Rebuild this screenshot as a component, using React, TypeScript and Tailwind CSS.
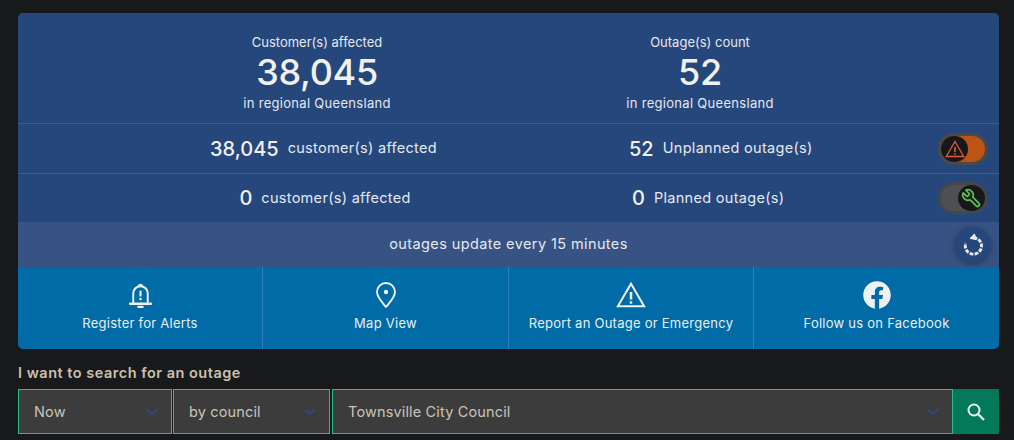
function StatTop({ label, value }: { label: string; value: string }) {
  return (
    <div className="flex w-[383px] flex-col items-center">
      <p className="text-[13px] leading-[16px] text-[#e4e8ef]">{label}</p>
      <p className="mt-[1px] text-[36px] leading-[42px] font-medium tracking-[-0.3px] text-[#f0f0ee]">{value}</p>
      <p className="mt-[2px] text-[13px] leading-[16px] tracking-[0.3px] text-[#e4e8ef]">in regional Queensland</p>
    </div>
  );
}

function StatRow({ value, text }: { value: string; text: string }) {
  return (
    <div className="flex items-center gap-[9px]">
      <span className="text-[20px] leading-[26px] font-medium text-[#f0f0ee]">{value}</span>
      <span className="pb-[1px] text-[14.5px] leading-[18px] tracking-[0.3px] text-[#e4e8ef]">{text}</span>
    </div>
  );
}

function WarningIcon({ className }: { className: string }) {
  return (
    <svg viewBox="0 0 24 24" fill="none" stroke="currentColor" strokeWidth="1.6" className={className}>
      <path d="M12 3 L22.5 21 H1.5 Z" strokeLinejoin="miter" />
      <path d="M12 9.5 V15.5 M12 17 V19" strokeWidth="2" />
    </svg>
  );
}

function Toggle({ on }: { on: boolean }) {
  return (
    <div
      className={`flex h-[32px] w-[50px] items-center rounded-full border-[3px] ${
        on ? "justify-start border-[#4b4a48] bg-[#bf5316]" : "justify-end border-[#45474b] bg-[#4e5053]"
      }`}
    >
      <div className="flex h-[26px] w-[27px] items-center justify-center rounded-full bg-[#17181a]">
        {on ? (
          <WarningIcon className="h-[20px] w-[20px] text-[#e0593a]" />
        ) : (
          <svg viewBox="0 0 24 24" fill="none" stroke="#5cc04f" strokeWidth="2" strokeLinejoin="round" className="h-[21px] w-[21px] -scale-x-100">
            <path d="M14.7 6.3a1 1 0 0 0 0 1.4l1.6 1.6a1 1 0 0 0 1.4 0l3.77-3.77a6 6 0 0 1-7.94 7.94l-6.91 6.91a2.12 2.12 0 0 1-3-3l6.91-6.91a6 6 0 0 1 7.94-7.94l-3.76 3.76z" />
          </svg>
        )}
      </div>
    </div>
  );
}

function LinkCell({ label, icon, className }: { label: string; icon: React.ReactNode; className: string }) {
  return (
    <div className={`flex flex-col items-center pt-[13px] ${className}`}>
      <div className="flex h-[30px] items-center justify-center text-[#eef2f5]">{icon}</div>
      <p className="mt-[4px] text-[13px] leading-[18px] tracking-[0.25px] whitespace-nowrap text-[#e8eef3]">{label}</p>
    </div>
  );
}

function Chevron() {
  return (
    <svg viewBox="0 0 12 8" fill="none" stroke="#33457c" strokeWidth="2.4" className="h-[8px] w-[12px]">
      <path d="M1 1.5 L6 6 L11 1.5" />
    </svg>
  );
}

function SelectBox({ label, className }: { label: string; className: string }) {
  return (
    <div className={`flex h-[45px] items-center justify-between border border-[#27c08c] bg-[#3c3c3c] pr-[13px] pl-[15px] ${className}`}>
      <span className="text-[14.5px] tracking-[0.15px] text-[#c9c4bb]">{label}</span>
      <Chevron />
    </div>
  );
}

export default function App() {
  return (
    <div className="h-[440px] w-[1014px] overflow-hidden bg-[#18191b] px-[18px] pt-[13px] font-['Inter','Open_Sans',sans-serif]">
      {/* summary card */}
      <div className="w-[981px] overflow-hidden rounded-[5px] bg-[#26477c]">
        <div className="flex h-[110px] justify-center pt-[21px]">
          <StatTop label="Customer(s) affected" value="38,045" />
          <StatTop label="Outage(s) count" value="52" />
        </div>
        <div className="flex h-[51px] items-center border-y border-[#3d5c8f] pr-[11px]">
          <div className="flex w-[611px] justify-center">
            <StatRow value="38,045" text="customer(s) affected" />
          </div>
          <StatRow value="52" text="Unplanned outage(s)" />
          <div className="ml-auto">
            <Toggle on />
          </div>
        </div>
        <div className="flex h-[48px] items-center pr-[11px]">
          <div className="flex w-[614px] justify-center">
            <StatRow value="0" text="customer(s) affected" />
          </div>
          <StatRow value="0" text="Planned outage(s)" />
          <div className="ml-auto">
            <Toggle on={false} />
          </div>
        </div>
        <div className="relative flex h-[45px] items-center justify-center bg-[#375383]">
          <p className="pb-[1px] text-[14.5px] tracking-[0.4px] text-[#e4e8ef]">outages update every 15 minutes</p>
          <div className="absolute top-[5px] right-[9px] flex h-[35px] w-[35px] items-center justify-center rounded-full bg-[#26477c] shadow-[0_2px_6px_rgba(0,0,0,0.35)]">
            <svg viewBox="0 0 24 24" fill="none" stroke="#e6eaf0" strokeWidth="3" className="h-[23px] w-[23px]">
              <path d="M13 5a8.5 8.5 0 1 1-8 5.5" strokeDasharray="4 1.3" />
              <path d="M10 5.5 L14 1.5 L15.5 6.5 Z" fill="#e6eaf0" strokeWidth="1.5" strokeLinejoin="round" />
            </svg>
          </div>
        </div>
        {/* quick links */}
        <div className="flex h-[82px] bg-[#006ba6]">
          <LinkCell
            className="w-[245px] border-r border-[#2a80b8]"
            label="Register for Alerts"
            icon={
              <svg viewBox="0 0 24 28" fill="none" stroke="currentColor" strokeWidth="1.9" className="h-[29px] w-[25px]">
                <path d="M5 21 V12 a7 7 0 0 1 14 0 V21" />
                <path d="M2 22 H22" strokeWidth="2.4" strokeLinecap="round" />
                <path d="M10.5 5 a1.5 1.5 0 0 1 3 0" />
                <path d="M10 25 H14" strokeWidth="2.2" strokeLinecap="round" />
                <path d="M12 9.5 V15 M12 16.5 V18.5" strokeWidth="2" />
              </svg>
            }
          />
          <LinkCell
            className="w-[246px] border-r border-[#2a80b8]"
            label="Map View"
            icon={
              <svg viewBox="0 0 24 28" fill="none" stroke="currentColor" strokeWidth="1.9" className="h-[28px] w-[24px]">
                <path d="M12 26 C7 20 3 16 3 11 a9 9 0 0 1 18 0 C21 16 17 20 12 26 Z" strokeLinejoin="round" />
                <circle cx="12" cy="11" r="2.2" fill="currentColor" stroke="none" />
              </svg>
            }
          />
          <LinkCell
            className="w-[245px] border-r border-[#2a80b8]"
            label="Report an Outage or Emergency"
            icon={<WarningIcon className="h-[30px] w-[30px]" />}
          />
          <LinkCell
            className="flex-1"
            label="Follow us on Facebook"
            icon={
              <svg viewBox="0 0 24 24" fill="currentColor" className="h-[30px] w-[30px]">
                <path d="M23 12.07C23 5.95 18.08 1 12 1S1 5.95 1 12.07c0 5.53 4.02 10.11 9.28 10.93v-7.73H7.49v-3.2h2.79V9.63c0-2.77 1.64-4.3 4.15-4.3 1.2 0 2.46.21 2.46.21v2.72h-1.39c-1.36 0-1.79.85-1.79 1.73v2.08h3.05l-.49 3.2h-2.56V23C18.98 22.18 23 17.6 23 12.07z" />
              </svg>
            }
          />
        </div>
      </div>
      {/* search */}
      <p className="mt-[15px] text-[14.5px] leading-[18px] font-semibold tracking-[0.5px] text-[#c9c0b0]">I want to search for an outage</p>
      <div className="mt-[7px] flex w-[981px]">
        <SelectBox label="Now" className="w-[154px]" />
        <SelectBox label="by council" className="ml-[1px] w-[157px]" />
        <SelectBox label="Townsville City Council" className="ml-[2px] flex-1" />
        <div className="flex h-[45px] w-[46px] items-center justify-center bg-[#04795a]">
          <svg viewBox="0 0 20 20" fill="none" stroke="#e8f0ec" strokeWidth="2" className="h-[20px] w-[20px]">
            <circle cx="8" cy="8" r="5.5" />
            <path d="M12 12 L18 18" strokeWidth="2.4" />
          </svg>
        </div>
      </div>
    </div>
  );
}
